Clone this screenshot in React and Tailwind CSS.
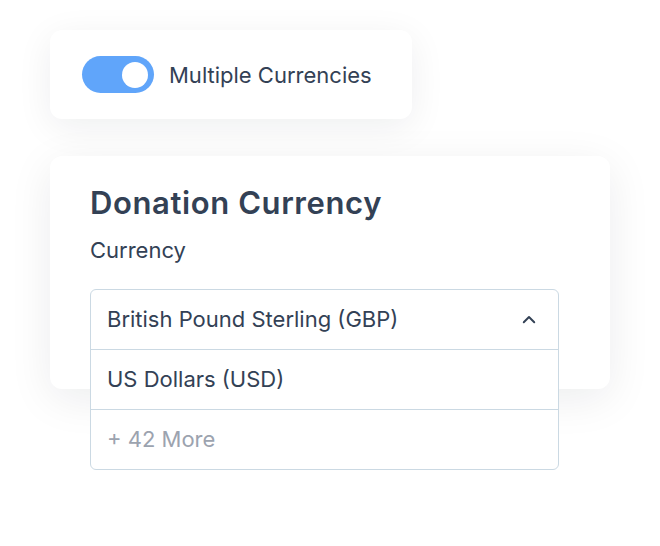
import { useState } from 'react';

export default function App() {
  const [on, setOn] = useState(true);

  return (
    <div className="min-h-[546px] w-[660px] bg-white pt-[30px] pl-[50px] text-[#334155]" style={{ fontFamily: 'Inter, "Noto Sans", sans-serif' }}>
      <div className="flex h-[89px] w-[362px] items-center gap-[15px] rounded-xl bg-white pl-[32px] shadow-[0_8px_36px_rgba(15,23,42,0.07)]">
        <button
          onClick={() => setOn(!on)}
          className={`flex h-[37px] w-[72px] items-center rounded-full px-[6px] ${on ? 'justify-end bg-[#60a5fa]' : 'justify-start bg-gray-300'}`}
        >
          <span className="block h-[26px] w-[26px] rounded-full bg-white" />
        </button>
        <span className="text-[22px] leading-[28px]">Multiple Currencies</span>
      </div>

      <div className="mt-[37px] h-[233px] w-[560px] rounded-xl bg-white pt-[29px] pl-[40px] shadow-[0_10px_44px_rgba(15,23,42,0.08)]">
        <h2 className="text-[31px] font-semibold leading-[36px] tracking-[0.6px]">Donation Currency</h2>
        <div className="mt-[15px] text-[22px] leading-[28px]">Currency</div>
        <div className="mt-[25px] w-[469px] overflow-hidden rounded-md border border-[#cbd9e3] bg-white">
          <div className="flex h-[59px] items-center justify-between pl-[16px] pr-[20px] text-[22px]">
            <span>British Pound Sterling (GBP)</span>
            <svg width="18" height="18" viewBox="0 0 24 24" fill="none" stroke="#334155" strokeWidth="2.6" strokeLinecap="round" strokeLinejoin="round">
              <path d="M5 15l7-7 7 7" />
            </svg>
          </div>
          <div className="flex h-[60px] items-center border-t border-[#cbd9e3] pl-[16px] text-[22px]">US Dollars (USD)</div>
          <div className="flex h-[60px] items-center border-t border-[#cbd9e3] pl-[16px] text-[22px] text-[#9ca3af]">+ 42 More</div>
        </div>
      </div>
    </div>
  );
}
